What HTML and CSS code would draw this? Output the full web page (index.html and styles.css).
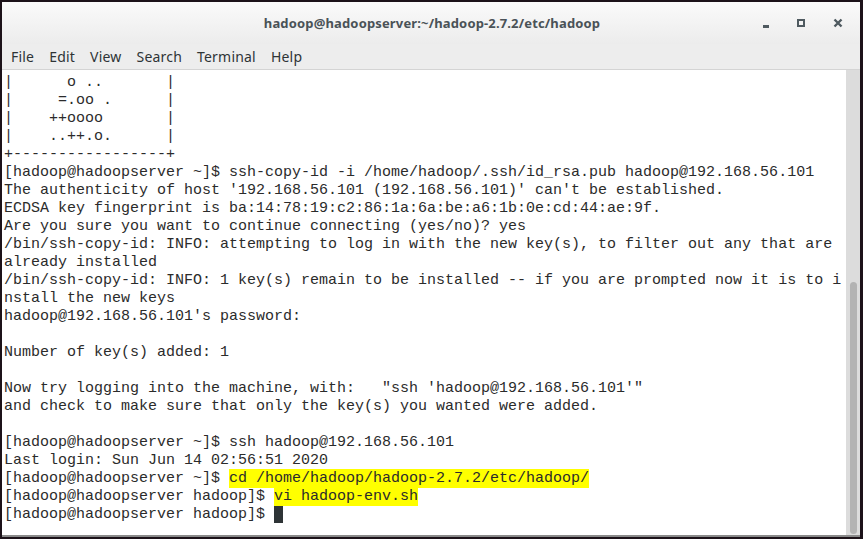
FILE: index.html
```html
<!DOCTYPE html>
<html lang="en">

<head>
    <meta charset="UTF-8">
    <title>hadoop@hadoopserver:~/hadoop-2.7.2/etc/hadoop</title>
    <link rel="stylesheet" href="styles.css">
</head>

<body>
<div class="window">
    <div class="titlebar">
        <span class="title">hadoop@hadoopserver:~/hadoop-2.7.2/etc/hadoop</span>
        <div class="wm-buttons">
            <span class="wm-min"></span>
            <span class="wm-max"></span>
            <svg class="wm-close" width="10" height="10" viewBox="0 0 10 10">
                <path d="M1.5 1.5 L8.5 8.5 M8.5 1.5 L1.5 8.5" stroke="#4f5a60" stroke-width="2.4"/>
            </svg>
        </div>
    </div>
    <div class="menubar">
        <span class="menu-item">File</span>
        <span class="menu-item">Edit</span>
        <span class="menu-item">View</span>
        <span class="menu-item">Search</span>
        <span class="menu-item">Terminal</span>
        <span class="menu-item">Help</span>
    </div>
    <div class="terminal">
<pre class="screen">|      o ..       |
|     =.oo .      |
|    ++oooo       |
|    ..++.o.      |
+-----------------+
[hadoop@hadoopserver ~]$ ssh-copy-id -i /home/hadoop/.ssh/id_rsa.pub hadoop@192.168.56.101
The authenticity of host '192.168.56.101 (192.168.56.101)' can't be established.
ECDSA key fingerprint is ba:14:78:19:c2:86:1a:6a:be:a6:1b:0e:cd:44:ae:9f.
Are you sure you want to continue connecting (yes/no)? yes
/bin/ssh-copy-id: INFO: attempting to log in with the new key(s), to filter out any that are
already installed
/bin/ssh-copy-id: INFO: 1 key(s) remain to be installed -- if you are prompted now it is to i
nstall the new keys
hadoop@192.168.56.101's password:

Number of key(s) added: 1

Now try logging into the machine, with:   "ssh 'hadoop@192.168.56.101'"
and check to make sure that only the key(s) you wanted were added.

[hadoop@hadoopserver ~]$ ssh hadoop@192.168.56.101
Last login: Sun Jun 14 02:56:51 2020
[hadoop@hadoopserver ~]$ <span class="mark">cd /home/hadoop/hadoop-2.7.2/etc/hadoop/</span>
[hadoop@hadoopserver hadoop]$ <span class="mark">vi hadoop-env.sh</span>
[hadoop@hadoopserver hadoop]$ <span class="cursor"> </span></pre>
        <div class="scrollbar">
            <div class="thumb"></div>
        </div>
    </div>
</div>
</body>

</html>
```

FILE: styles.css
```css
body {
    margin: 0;
    background-color: #1c1219;
    width: 863px;
    height: 539px;
    overflow: hidden;
}

.window {
    margin: 2px 0 0 2px;
    width: 858px;
    height: 535px;
    display: flex;
    flex-direction: column;
    background-color: #ededed;
    border-bottom: 2px solid #8a8a8a;
    box-sizing: border-box;
}

.titlebar {
    height: 42px;
    display: flex;
    align-items: center;
    justify-content: center;
    position: relative;
    background: linear-gradient(#fafafa, #ececec);
}

.title {
    font-family: "Noto Sans", "DejaVu Sans", sans-serif;
    font-weight: bold;
    font-size: 13px;
    color: #4a5257;
    margin-left: 2px;
    letter-spacing: 0.15px;
}

.wm-buttons {
    position: absolute;
    right: 17px;
    top: 16px;
    display: flex;
    align-items: center;
    gap: 28px;
}

.wm-min {
    width: 6px;
    height: 3px;
    margin-top: 6px;
    background-color: #4f5a60;
}

.wm-max {
    width: 4px;
    height: 4px;
    border: 2px solid #4f5a60;
}

.wm-close {
    display: block;
}

.menubar {
    height: 25px;
    display: flex;
    align-items: center;
    padding-left: 9px;
    border-bottom: 1px solid #d4d4d4;
}

.menu-item {
    font-family: "Noto Sans", "DejaVu Sans", sans-serif;
    font-size: 14px;
    color: #2e3436;
    margin-right: 15px;
    letter-spacing: 0.2px;
}

.terminal {
    flex: 1;
    display: flex;
    background-color: #ffffff;
    min-height: 0;
}

.screen {
    flex: 1;
    margin: 0;
    padding: 4px 0 0 2px;
    font-family: "Liberation Mono", monospace;
    font-size: 15px;
    line-height: 18px;
    color: #2b2b2b;
    overflow: hidden;
}

.mark {
    background-color: #ffff00;
    padding: 1px 0;
}

.cursor {
    background-color: #2e3436;
}

.scrollbar {
    width: 14px;
    background-color: #dcdcdc;
    display: flex;
    flex-direction: column;
    justify-content: flex-end;
    align-items: center;
    padding-bottom: 1px;
}

.thumb {
    width: 7px;
    height: 252px;
    background-color: #b3b3b3;
    border-radius: 4px;
}
```
